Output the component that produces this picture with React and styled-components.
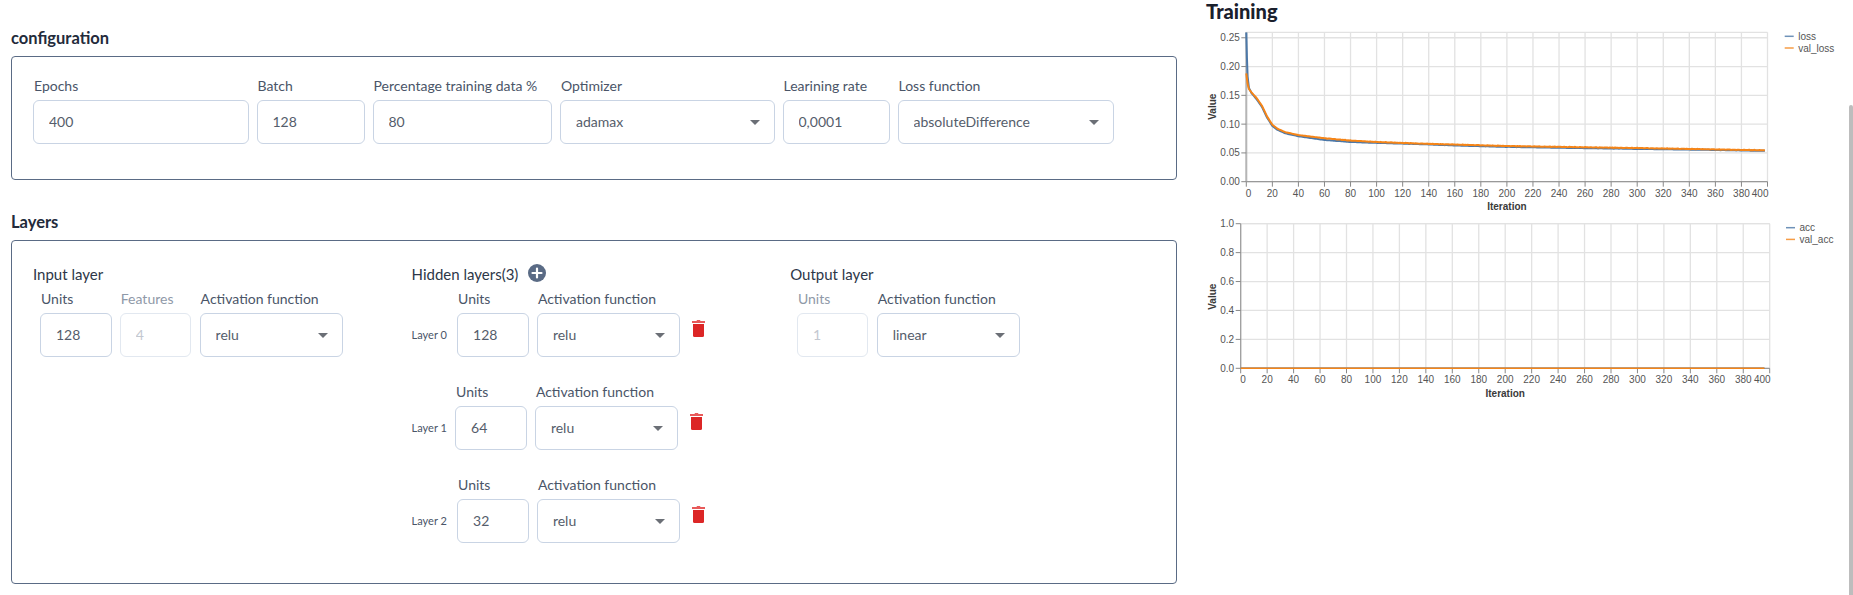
import React from 'react';
import styled, { createGlobalStyle } from 'styled-components';

const GlobalStyle = createGlobalStyle`
  html, body {
    margin: 0;
    padding: 0;
    height: 100%;
    overflow: hidden;
    background: #fff;
  }
  body {
    font-family: 'Lato', 'Liberation Sans', sans-serif;
    color: #4a5568;
  }
`;

const Page = styled.div`
  display: flex;
  width: 1853px;
  height: 595px;
  overflow: hidden;
`;

const LeftColumn = styled.div`
  flex: 0 0 1206px;
  box-sizing: border-box;
  padding: 26px 0 0 11px;
`;

const RightColumn = styled.div`
  flex: 1;
`;

const SectionTitle = styled.h2`
  margin: 0 0 6px;
  font-size: 16.5px;
  line-height: 24px;
  font-weight: 700;
  color: #232b3b;
`;

const TrainingTitle = styled.h2`
  margin: 0;
  font-size: 20px;
  line-height: 22px;
  font-weight: 900;
  color: #1a202c;
`;

const Panel = styled.section`
  box-sizing: border-box;
  width: 1166px;
  height: ${p => p.$height}px;
  margin-bottom: ${p => p.$gap || 0}px;
  border: 1px solid #5a6b85;
  border-radius: 4px;
`;

const ConfigRow = styled.div`
  display: flex;
  gap: 8px;
  padding: 19px 0 0 21px;
`;

const LayerGrid = styled.div`
  display: grid;
  grid-template-columns: repeat(3, 378.6px);
  padding: 22px 0 0 21px;
`;

const LayerTitle = styled.div`
  display: flex;
  align-items: center;
  gap: 10px;
  height: 22px;
  margin-bottom: 4px;
  font-size: 15px;
  color: #2d3748;
`;

const LayerRows = styled.div`
  display: flex;
  flex-direction: column;
  gap: 25px;
`;

const FieldRow = styled.div`
  display: flex;
  align-items: flex-start;
  gap: 8.3px;
  padding-left: ${p => p.$indent || 0}px;
`;

const RowName = styled.span`
  align-self: flex-end;
  flex: 0 0 ${p => p.$width}px;
  min-width: 0;
  height: 44px;
  line-height: 44px;
  margin-right: 1.7px;
  font-size: 11px;
  white-space: nowrap;
  color: #4a5568;
`;

const Field = styled.div`
  display: flex;
  flex-direction: column;
  gap: 4px;
  width: ${p => p.$width}px;
`;

const Label = styled.label`
  padding-left: 1px;
  font-size: 14px;
  line-height: 20px;
  white-space: nowrap;
  color: ${p => (p.$muted ? '#8f99a8' : '#4a5568')};
`;

const TextInput = styled.input`
  box-sizing: border-box;
  width: 100%;
  height: 44px;
  padding: 0 15px 1px;
  font: inherit;
  font-size: 14px;
  color: #555d6b;
  background: #fff;
  border: 1px solid #c9d4e4;
  border-radius: 6px;
  outline: none;

  &:disabled {
    color: #c3c8d0;
    border-color: #e2e8f0;
  }
`;

const SelectWrap = styled.div`
  position: relative;

  &::after {
    content: '';
    position: absolute;
    right: 15px;
    top: 20px;
    border-left: 5px solid transparent;
    border-right: 5px solid transparent;
    border-top: 5px solid #6b6f76;
    pointer-events: none;
  }
`;

const SelectBox = styled.select`
  box-sizing: border-box;
  width: 100%;
  height: 44px;
  padding: 0 30px 1px 15px;
  font: inherit;
  font-size: 14px;
  color: #555d6b;
  background: #fff;
  border: 1px solid #c9d4e4;
  border-radius: 6px;
  outline: none;
  appearance: none;
`;

const AddButton = styled.svg`
  width: 18px;
  height: 18px;
  margin-top: -2px;
`;

const TrashIcon = styled.svg`
  width: 13px;
  height: 17px;
  margin: 31px 0 0 4px;
`;

const ChartSvg = styled.svg`
  display: block;
`;

const TickLabel = styled.text`
  font-family: 'Liberation Sans', Arial, sans-serif;
  font-size: 10px;
  fill: #555;
`;

const AxisTitle = styled.text`
  font-family: 'Liberation Sans', Arial, sans-serif;
  font-size: 10px;
  font-weight: 700;
  fill: #3a3a3a;
  text-anchor: middle;
`;

const ScrollThumb = styled.div`
  position: fixed;
  right: 0;
  top: 105px;
  bottom: 0;
  width: 4px;
  border-radius: 2px 2px 0 0;
  background: #bdbdbd;
`;

const BLUE = '#4c78a8';
const ORANGE = '#f58518';

const lossKeys = [
  [0, 0.259], [0.5, 0.215], [1, 0.183], [2, 0.163], [4, 0.154], [8, 0.143], [12, 0.13], [16, 0.111],
  [20, 0.097], [24, 0.09], [30, 0.084], [40, 0.079], [60, 0.0725], [80, 0.069], [100, 0.0675],
  [130, 0.0655], [160, 0.063], [200, 0.0605], [240, 0.059], [300, 0.057], [350, 0.0555], [400, 0.0535],
];

const valLossKeys = [
  [0, 0.188], [1, 0.17], [2, 0.161], [4, 0.155], [8, 0.145], [12, 0.132], [16, 0.113],
  [20, 0.099], [24, 0.092], [30, 0.086], [40, 0.081], [60, 0.0755], [80, 0.0715], [100, 0.069],
  [130, 0.0665], [160, 0.0645], [200, 0.062], [240, 0.0605], [300, 0.0585], [350, 0.0565], [400, 0.0545],
];

const interpolate = (keys, x) => {
  const i = keys.findIndex(k => k[0] >= x);
  if (i <= 0) return keys[0][1];
  const [x0, y0] = keys[i - 1];
  const [x1, y1] = keys[i];
  return y0 + ((y1 - y0) * (x - x0)) / (x1 - x0);
};

const sample = (keys, noise) => {
  const xs = [0, 0.5, 1, 1.5];
  for (let x = 2; x <= 398; x += 1) xs.push(x);
  return xs.map(x => [x, interpolate(keys, x) + (x > 60 ? noise * Math.sin(x * 2.3) * Math.cos(x * 0.7) : 0)]);
};

const range = (n, fn) => Array.from({ length: n }, (_, i) => fn(i));
const xTicks = range(21, i => i * 20);

function Chart({ x0, x1, top, bottom, yMax, yTicks, yDigits, series, legend, titleY, height, valueY, legendX, axis }) {
  const sx = v => x0 + ((x1 - x0) * v) / 400;
  const sy = v => bottom - ((bottom - top) * v) / yMax;
  return (
    <ChartSvg width="647" height={height}>
      {yTicks.map(t => (
        <line key={t} x1={x0} x2={x1} y1={sy(t)} y2={sy(t)} stroke="#e2e2e2" strokeWidth="1.3" />
      ))}
      {xTicks.map(t => (
        <line key={t} x1={sx(t)} x2={sx(t)} y1={top} y2={bottom} stroke="#e2e2e2" strokeWidth="1.3" />
      ))}
      <line x1={x0} x2={x1} y1={top} y2={top} stroke="#e2e2e2" strokeWidth="1.3" />
      <line x1={x0} x2={x0} y1={top} y2={bottom} stroke={axis.color} strokeWidth={axis.width} />
      <line x1={x0} x2={x1} y1={bottom} y2={bottom} stroke="#999" strokeWidth="1.2" />
      {yTicks.map(t => (
        <g key={t}>
          <line x1={x0 - 5} x2={x0} y1={sy(t)} y2={sy(t)} stroke="#888" />
          <TickLabel x={x0 - 6.5} y={sy(t) + 3.5} textAnchor="end">
            {t.toFixed(yDigits)}
          </TickLabel>
        </g>
      ))}
      {xTicks.map((t, i) => {
        let anchor = 'middle';
        if (i === 0) anchor = 'start';
        if (t === 400) anchor = 'end';
        return (
          <g key={t}>
            <line x1={sx(t)} x2={sx(t)} y1={bottom} y2={bottom + 5} stroke="#888" />
            <TickLabel x={i === 0 ? x0 - 0.5 : sx(t) + (t === 400 ? 1 : 0)} y={bottom + 15} textAnchor={anchor}>
              {t}
            </TickLabel>
          </g>
        );
      })}
      <AxisTitle x={(x0 + x1) / 2} y={titleY}>
        Iteration
      </AxisTitle>
      <AxisTitle transform={`translate(9.5 ${valueY}) rotate(-90)`}>Value</AxisTitle>
      {series.map(s => (
        <polyline
          key={s.color}
          fill="none"
          stroke={s.color}
          strokeWidth={s.width}
          strokeLinejoin="round"
          points={s.points.map(([x, y]) => `${sx(x).toFixed(2)},${sy(y).toFixed(2)}`).join(' ')}
        />
      ))}
      {legend.map((l, i) => (
        <g key={l.name}>
          <line x1={legendX} x2={legendX + 9} y1={top + 4 + i * 11.7} y2={top + 4 + i * 11.7} stroke={l.color} strokeWidth="1.5" opacity="0.8" />
          <TickLabel x={legendX + 13.5} y={top + 7.5 + i * 11.7}>
            {l.name}
          </TickLabel>
        </g>
      ))}
    </ChartSvg>
  );
}

function InputField({ label, value, width, disabled }) {
  return (
    <Field $width={width}>
      <Label $muted={disabled}>{label}</Label>
      <TextInput defaultValue={value} disabled={disabled} />
    </Field>
  );
}

function SelectField({ label, value, width }) {
  return (
    <Field $width={width}>
      <Label>{label}</Label>
      <SelectWrap>
        <SelectBox defaultValue={value}>
          <option value={value}>{value}</option>
        </SelectBox>
      </SelectWrap>
    </Field>
  );
}

const hiddenLayers = [
  { name: 'Layer 0', units: 128, nameWidth: 35.5 },
  { name: 'Layer 1', units: 64, nameWidth: 33.5 },
  { name: 'Layer 2', units: 32, nameWidth: 35.5 },
];

export default function App() {
  const flat = range(100, i => [i * 4, 0.0008]);
  return (
    <Page>
      <GlobalStyle />
      <LeftColumn>
        <SectionTitle>configuration</SectionTitle>
        <Panel $height={124} $gap={30}>
          <ConfigRow>
            <InputField label="Epochs" value="400" width={215.5} />
            <InputField label="Batch" value="128" width={108} />
            <InputField label="Percentage training data %" value="80" width={179.5} />
            <SelectField label="Optimizer" value="adamax" width={214.5} />
            <InputField label="Learining rate" value="0,0001" width={107} />
            <SelectField label="Loss function" value="absoluteDifference" width={216} />
          </ConfigRow>
        </Panel>
        <SectionTitle>Layers</SectionTitle>
        <Panel $height={344}>
          <LayerGrid>
            <div>
              <LayerTitle>Input layer</LayerTitle>
              <FieldRow $indent={7}>
                <InputField label="Units" value="128" width={71.5} />
                <InputField label="Features" value="4" width={71.5} disabled />
                <SelectField label="Activation function" value="relu" width={143} />
              </FieldRow>
            </div>
            <div>
              <LayerTitle>
                Hidden layers(3)
                <AddButton viewBox="0 0 18 18">
                  <circle cx="9" cy="9" r="9" fill="#5a6b85" />
                  <path d="M9 4.5v9M4.5 9h9" stroke="#fff" strokeWidth="2.2" strokeLinecap="round" />
                </AddButton>
              </LayerTitle>
              <LayerRows>
                {hiddenLayers.map(layer => (
                  <FieldRow key={layer.name}>
                    <RowName $width={layer.nameWidth}>{layer.name}</RowName>
                    <InputField label="Units" value={layer.units} width={71.5} />
                    <SelectField label="Activation function" value="relu" width={143} />
                    <TrashIcon viewBox="0 0 13 17">
                      <path d="M4.5 1 5 0h3l.5 1H13v2H0V1z" fill="#e85a5a" />
                      <path d="M1 4h11v11.5a1.5 1.5 0 0 1-1.5 1.5h-8A1.5 1.5 0 0 1 1 15.5z" fill="#dc2626" />
                    </TrashIcon>
                  </FieldRow>
                ))}
              </LayerRows>
            </div>
            <div>
              <LayerTitle>Output layer</LayerTitle>
              <FieldRow $indent={6.7}>
                <InputField label="Units" value="1" width={71.5} disabled />
                <SelectField label="Activation function" value="linear" width={143} />
              </FieldRow>
            </div>
          </LayerGrid>
        </Panel>
      </LeftColumn>
      <RightColumn>
        <TrainingTitle>Training</TrainingTitle>
        <Chart
          x0={40.3}
          x1={561.5}
          top={10.3}
          bottom={159.7}
          yMax={0.2595}
          yTicks={[0, 0.05, 0.1, 0.15, 0.2, 0.25]}
          yDigits={2}
          titleY={188}
          valueY={84.7}
          height={193}
          legendX={578.7}
          axis={{ color: '#b5b5b5', width: 2 }}
          series={[
            { color: BLUE, width: 2, points: sample(lossKeys, 0.0002) },
            { color: ORANGE, width: 2, points: sample(valLossKeys, 0.0005) },
          ]}
          legend={[
            { name: 'loss', color: BLUE },
            { name: 'val_loss', color: ORANGE },
          ]}
        />
        <Chart
          x0={34.7}
          x1={563.7}
          top={8.7}
          bottom={153.3}
          yMax={1}
          yTicks={[0, 0.2, 0.4, 0.6, 0.8, 1]}
          yDigits={1}
          titleY={182}
          valueY={81.7}
          height={190}
          legendX={580}
          axis={{ color: '#999', width: 1.2 }}
          series={[
            { color: BLUE, width: 1.5, points: flat },
            { color: ORANGE, width: 1.5, points: flat },
          ]}
          legend={[
            { name: 'acc', color: BLUE },
            { name: 'val_acc', color: ORANGE },
          ]}
        />
      </RightColumn>
      <ScrollThumb />
    </Page>
  );
}
